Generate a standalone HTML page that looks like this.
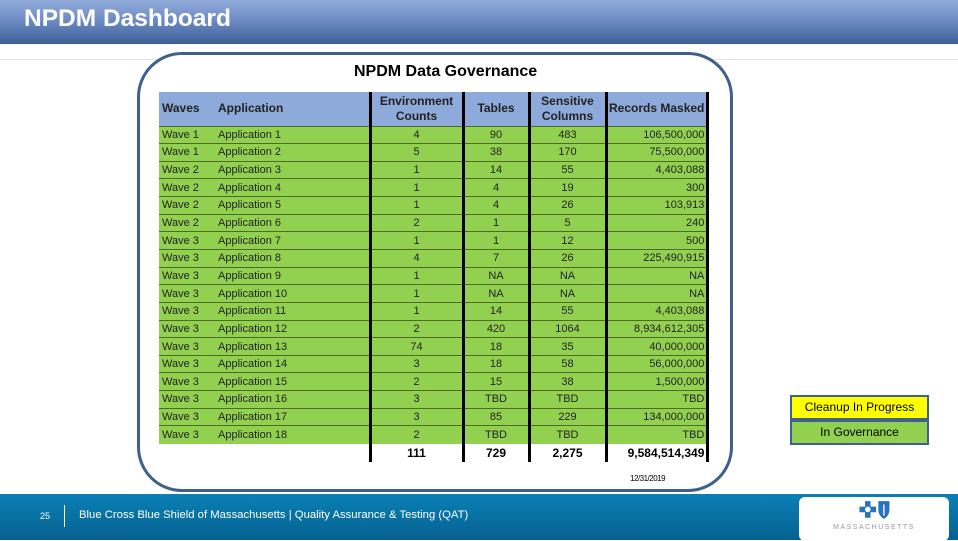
<!DOCTYPE html>
<html><head><meta charset="utf-8"><style>
*{margin:0;padding:0;box-sizing:border-box}
body{width:958px;height:540px;position:relative;overflow:hidden;background:#fff;font-family:"Liberation Sans",sans-serif}
.hdr{position:absolute;left:0;top:0;width:958px;height:44px;background:linear-gradient(#93acdc,#6d8cc4 45%,#3c5f96)}
.hdr span{position:absolute;left:24px;top:5px;color:#fff;font-weight:bold;font-size:24.5px}
.rule{position:absolute;left:0;top:59px;width:958px;height:1px;background:#e0e0e0}
.frame{position:absolute;left:137px;top:52px;width:596px;height:440px;border:3px solid #3f5f8c;border-radius:45px;background:#fff}
.title{position:absolute;left:354px;top:63px;font-weight:bold;font-size:16px;color:#000}
table{position:absolute;left:159px;top:92px;border-collapse:collapse;table-layout:fixed;font-family:"Liberation Sans Narrow","Liberation Sans",sans-serif;font-size:11px;color:#222}
td{height:17.65px;padding:0 3px;white-space:nowrap;background:#92d050;border-top:1px solid #4e6b2a;line-height:16px}
tr.h td{background:#8eaadb;height:34px;font-weight:bold;font-size:12px;line-height:15px;border-top:none}
tr.t td{background:#fff;border-top:none;font-weight:bold;font-size:12px;color:#000;height:18px}
.c{text-align:center}.r{text-align:right}
.vl{position:absolute;top:92px;width:3px;height:370px;background:#000}
.date{position:absolute;left:630px;top:474px;font-size:8px;color:#000;letter-spacing:-0.5px}
.lg{position:absolute;left:790px;width:139px;height:25px;border:2px solid #3f5f8c;text-align:center;font-family:"Liberation Sans Narrow","Liberation Sans",sans-serif;font-size:12px;line-height:21px;color:#000}
.ftr{position:absolute;left:0;top:494px;width:958px;height:46px;background:linear-gradient(#0b80b6,#05618f)}
.pn{position:absolute;left:40px;top:511px;color:#fff;font-size:9px}
.dv{position:absolute;left:64px;top:505px;width:1px;height:22px;background:#fff}
.ft{position:absolute;left:79px;top:509px;color:#fff;font-size:11.3px}
.logo{position:absolute;left:799px;top:497px;width:150px;height:44px;background:#fff;border-radius:6px}
.logo .m{position:absolute;left:0;width:150px;top:27px;text-align:center;font-size:7px;letter-spacing:1.5px;color:#999}
</style></head><body>
<div class="hdr"><span>NPDM Dashboard</span></div>
<div class="rule"></div>
<div class="frame"></div>
<div class="title">NPDM Data Governance</div>
<table>
<colgroup><col style="width:56px"><col style="width:155px"><col style="width:93px"><col style="width:66px"><col style="width:77px"><col style="width:101px"></colgroup>
<tr class="h"><td>Waves</td><td>Application</td><td class="c">Environment<br>Counts</td><td class="c">Tables</td><td class="c">Sensitive<br>Columns</td><td class="c">Records Masked</td></tr>
<tr><td>Wave 1</td><td>Application 1</td><td class="c">4</td><td class="c">90</td><td class="c">483</td><td class="r">106,500,000</td></tr>
<tr><td>Wave 1</td><td>Application 2</td><td class="c">5</td><td class="c">38</td><td class="c">170</td><td class="r">75,500,000</td></tr>
<tr><td>Wave 2</td><td>Application 3</td><td class="c">1</td><td class="c">14</td><td class="c">55</td><td class="r">4,403,088</td></tr>
<tr><td>Wave 2</td><td>Application 4</td><td class="c">1</td><td class="c">4</td><td class="c">19</td><td class="r">300</td></tr>
<tr><td>Wave 2</td><td>Application 5</td><td class="c">1</td><td class="c">4</td><td class="c">26</td><td class="r">103,913</td></tr>
<tr><td>Wave 2</td><td>Application 6</td><td class="c">2</td><td class="c">1</td><td class="c">5</td><td class="r">240</td></tr>
<tr><td>Wave 3</td><td>Application 7</td><td class="c">1</td><td class="c">1</td><td class="c">12</td><td class="r">500</td></tr>
<tr><td>Wave 3</td><td>Application 8</td><td class="c">4</td><td class="c">7</td><td class="c">26</td><td class="r">225,490,915</td></tr>
<tr><td>Wave 3</td><td>Application 9</td><td class="c">1</td><td class="c">NA</td><td class="c">NA</td><td class="r">NA</td></tr>
<tr><td>Wave 3</td><td>Application 10</td><td class="c">1</td><td class="c">NA</td><td class="c">NA</td><td class="r">NA</td></tr>
<tr><td>Wave 3</td><td>Application 11</td><td class="c">1</td><td class="c">14</td><td class="c">55</td><td class="r">4,403,088</td></tr>
<tr><td>Wave 3</td><td>Application 12</td><td class="c">2</td><td class="c">420</td><td class="c">1064</td><td class="r">8,934,612,305</td></tr>
<tr><td>Wave 3</td><td>Application 13</td><td class="c">74</td><td class="c">18</td><td class="c">35</td><td class="r">40,000,000</td></tr>
<tr><td>Wave 3</td><td>Application 14</td><td class="c">3</td><td class="c">18</td><td class="c">58</td><td class="r">56,000,000</td></tr>
<tr><td>Wave 3</td><td>Application 15</td><td class="c">2</td><td class="c">15</td><td class="c">38</td><td class="r">1,500,000</td></tr>
<tr><td>Wave 3</td><td>Application 16</td><td class="c">3</td><td class="c">TBD</td><td class="c">TBD</td><td class="r">TBD</td></tr>
<tr><td>Wave 3</td><td>Application 17</td><td class="c">3</td><td class="c">85</td><td class="c">229</td><td class="r">134,000,000</td></tr>
<tr><td>Wave 3</td><td>Application 18</td><td class="c">2</td><td class="c">TBD</td><td class="c">TBD</td><td class="r">TBD</td></tr>
<tr class="t"><td></td><td></td><td class="c">111</td><td class="c">729</td><td class="c">2,275</td><td class="r">9,584,514,349</td></tr>
</table>
<div class="vl" style="left:369px"></div>
<div class="vl" style="left:462px"></div>
<div class="vl" style="left:528px"></div>
<div class="vl" style="left:605px"></div>
<div class="vl" style="left:706px"></div>
<div class="date">12/31/2019</div>
<div class="lg" style="top:395px;background:#ffff00">Cleanup In Progress</div>
<div class="lg" style="top:420px;background:#92d050">In Governance</div>
<div class="ftr"></div>
<div class="pn">25</div>
<div class="dv"></div>
<div class="ft">Blue Cross Blue Shield of Massachusetts | Quality Assurance &amp; Testing (QAT)</div>
<div class="logo">
<svg style="position:absolute;left:60px;top:3px" width="32" height="20" viewBox="0 0 28 18">
<path d="M4 0h5v5h5v5H9v5H4v-5H-1V5h5z" fill="#2a73b8" transform="translate(1,1)"/>
<circle cx="7.5" cy="8.5" r="2.5" fill="#fff"/>
<path d="M17 1h10v8c0 4-3 7-5 8c-2-1-5-4-5-8z" fill="#2a73b8"/>
<path d="M22 4v10" stroke="#fff" stroke-width="1.2"/>
</svg>
<div class="m">MASSACHUSETTS</div>
</div>
</body></html>
